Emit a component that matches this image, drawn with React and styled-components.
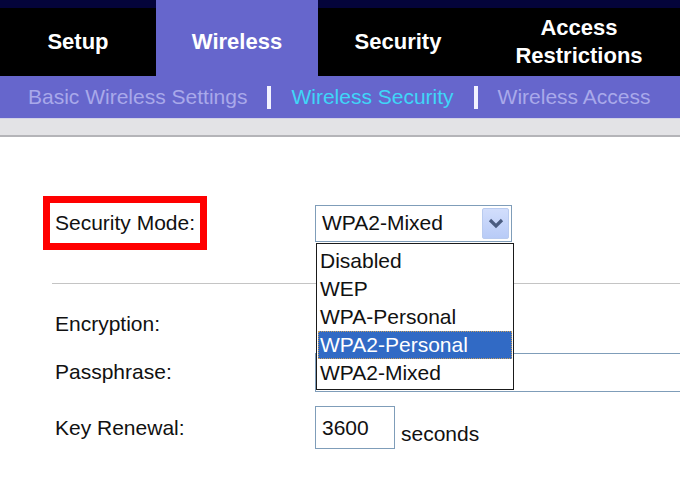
import React from "react"
import styled, { createGlobalStyle } from "styled-components"

const GlobalStyle = createGlobalStyle`
  html, body {
    margin: 0;
    padding: 0;
    background: #ffffff;
  }
  body {
    width: 680px;
    height: 480px;
    overflow: hidden;
    font-family: "Liberation Sans", Arial, sans-serif;
  }
`

const Page = styled.div`
  width: 680px;
  height: 480px;
  overflow: hidden;
  background: #ffffff;
`

const TabBar = styled.div`
  display: flex;
  height: 76px;
  background: #000000;
`

const Tab = styled.div`
  display: flex;
  align-items: center;
  justify-content: center;
  box-sizing: border-box;
  width: ${props => props.width}px;
  height: 76px;
  padding-top: ${props => (props.active ? 7 : 0)}px;
  border-top: ${props => (props.active ? "none" : "8px solid #04043a")};
  background: ${props => (props.active ? "#6666cc" : "#000000")};
  color: #ffffff;
  font-size: 22px;
  font-weight: bold;
  line-height: 28px;
  text-align: center;
`

const SubNav = styled.div`
  display: flex;
  align-items: center;
  gap: 20px;
  height: 42px;
  padding-left: 28px;
  background: #6666cc;
  font-size: 21px;
  white-space: nowrap;
`

const SubLink = styled.span`
  color: ${props => (props.active ? "#3fd6f8" : "#a9a9ea")};
`

const SubSep = styled.span`
  display: block;
  width: 4px;
  height: 23px;
  background: #f2f2ff;
`

const Band = styled.div`
  height: 16px;
  background: #e3e3e6;
  border-top: 1px solid #d2d2e6;
  border-bottom: 2px solid #b4b4b8;
`

const Body = styled.div`
  padding: 59px 0 0 52px;
`

const FormGrid = styled.div`
  display: grid;
  grid-template-columns: 263px 1fr;
  align-items: center;
`

const Label = styled.div`
  display: flex;
  align-items: center;
  height: ${props => props.h}px;
  padding-left: 3px;
  font-size: 21px;
  color: #111111;
`

const HighlightBox = styled.div`
  display: flex;
  align-items: center;
  box-sizing: border-box;
  width: 164px;
  height: 54px;
  margin-left: -9px;
  padding-left: 5px;
  border: 7px solid #ff0000;
  font-size: 21px;
  color: #111111;
  white-space: nowrap;
`

const Field = styled.div`
  position: relative;
  display: flex;
  align-items: center;
  gap: 6px;
  height: ${props => props.h}px;
`

const Select = styled.div`
  position: relative;
  display: flex;
  align-items: center;
  box-sizing: border-box;
  width: 197px;
  height: 37px;
  padding-left: 6px;
  border: 1px solid #7f9db9;
  font-size: 21px;
  color: #111111;
`

const ArrowButton = styled.div`
  position: absolute;
  top: 2px;
  right: 2px;
  display: flex;
  align-items: center;
  justify-content: center;
  box-sizing: border-box;
  width: 27px;
  height: 31px;
  border: 1px solid #b9cbef;
  border-radius: 2px;
  background: linear-gradient(#d2defc, #b8cbf7);
`

const DropList = styled.div`
  position: absolute;
  top: 37px;
  left: 0;
  z-index: 2;
  box-sizing: border-box;
  width: 198px;
  padding: 3px 0 2px;
  border: 1px solid #1a1a1a;
  background: #ffffff;
`

const Option = styled.div`
  box-sizing: border-box;
  height: 28px;
  margin: 0 1px;
  padding-left: 1px;
  font-size: 21px;
  line-height: 26px;
  white-space: nowrap;
  color: ${props => (props.selected ? "#ffffff" : "#111111")};
  background: ${props => (props.selected ? "#316ac5" : "transparent")};
  border: 1px ${props => (props.selected ? "dotted #c8a060" : "solid transparent")};
`

const Rule = styled.div`
  grid-column: 1 / span 2;
  height: 1px;
  margin: 33px 0 17px;
  background: #c4c4c4;
`

const TextInput = styled.div`
  display: flex;
  align-items: center;
  box-sizing: border-box;
  width: ${props => props.w}px;
  height: ${props => props.h}px;
  padding-left: 6px;
  border: 1px solid #7f9db9;
  border-right-width: ${props => (props.open ? 0 : 1)}px;
  font-size: 21px;
  color: #111111;
  flex-shrink: 0;
`

const Unit = styled.span`
  margin-top: 12px;
  font-size: 21px;
  color: #111111;
`

const Spacer = styled.div`
  grid-column: 1 / span 2;
  height: ${props => props.h}px;
`

const Chevron = () => (
  <svg width="16" height="12" viewBox="0 0 16 12">
    <path d="M2 3 L8 9 L14 3" fill="none" stroke="#4a5c80" strokeWidth="3.2" strokeLinejoin="miter" />
  </svg>
)

const modes = ["Disabled", "WEP", "WPA-Personal", "WPA2-Personal", "WPA2-Mixed"]

export default function App() {
  return (
    <Page>
      <GlobalStyle />
      <TabBar>
        <Tab width={156}>Setup</Tab>
        <Tab width={162} active>Wireless</Tab>
        <Tab width={160}>Security</Tab>
        <Tab width={202}>
          Access
          <br />
          Restrictions
        </Tab>
      </TabBar>
      <SubNav>
        <SubLink>Basic Wireless Settings</SubLink>
        <SubSep />
        <SubLink active>Wireless Security</SubLink>
        <SubSep />
        <SubLink>Wireless Access</SubLink>
      </SubNav>
      <Band />
      <Body>
        <FormGrid>
          <HighlightBox>Security Mode:</HighlightBox>
          <Field h={54}>
            <Select>
              WPA2-Mixed
              <ArrowButton>
                <Chevron />
              </ArrowButton>
              <DropList>
                {modes.map(m => (
                  <Option key={m} selected={m === "WPA2-Personal"}>
                    {m}
                  </Option>
                ))}
              </DropList>
            </Select>
          </Field>

          <Rule />

          <Label h={46}>Encryption:</Label>
          <Field h={46} />

          <Spacer h={6} />

          <Label h={38}>Passphrase:</Label>
          <Field h={38}>
            <TextInput w={400} h={39} open />
          </Field>

          <Spacer h={15} />

          <Label h={43}>Key Renewal:</Label>
          <Field h={43}>
            <TextInput w={80} h={43}>3600</TextInput>
            <Unit>seconds</Unit>
          </Field>
        </FormGrid>
      </Body>
    </Page>
  )
}
